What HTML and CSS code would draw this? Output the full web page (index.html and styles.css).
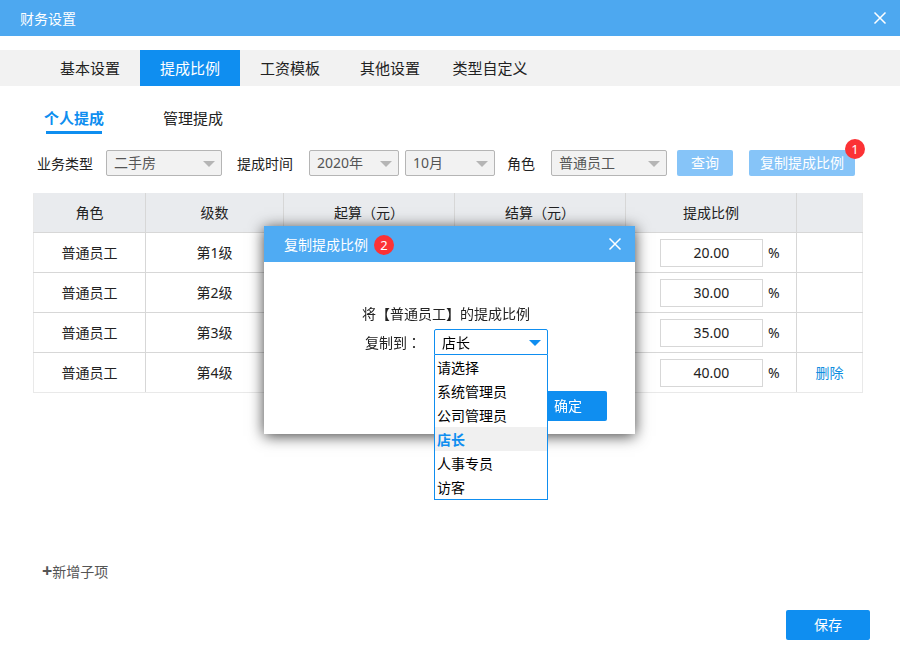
FILE: index.html
```
<!DOCTYPE html>
<html lang="zh-CN">
  <head>
    <meta charset="UTF-8" />
    <meta name="viewport" content="width=device-width, initial-scale=1.0" />
    <link rel="stylesheet" href="styles.css">
    <title>财务设置</title>
  </head>
  <body>
    <div class="window">
      <header class="titlebar">
        <h1>财务设置</h1>
        <button type="button" class="close" aria-label="关闭">
          <svg width="14" height="14" viewBox="0 0 14 14">
            <path d="M1.5 1.5L12.5 12.5M12.5 1.5L1.5 12.5" />
          </svg>
        </button>
      </header>

      <nav class="tabs">
        <a href="#basic">基本设置</a>
        <a href="#ratio" class="active">提成比例</a>
        <a href="#template">工资模板</a>
        <a href="#other">其他设置</a>
        <a href="#custom">类型自定义</a>
      </nav>

      <nav class="subtabs">
        <a href="#personal" class="active">个人提成</a>
        <a href="#manage">管理提成</a>
      </nav>

      <form class="filters">
        <label for="type">业务类型</label>
        <div class="select wide">
          <select id="type"><option>二手房</option></select>
        </div>
        <label for="year">提成时间</label>
        <div class="select">
          <select id="year"><option>2020年</option></select>
        </div>
        <div class="select">
          <select id="month" aria-label="月份"><option>10月</option></select>
        </div>
        <label for="role">角色</label>
        <div class="select wide">
          <select id="role"><option>普通员工</option></select>
        </div>
        <button type="button" class="btn-light query">查询</button>
        <div class="copy">
          <button type="button" class="btn-light">复制提成比例</button>
          <span class="badge">1</span>
        </div>
      </form>

      <main>
        <table>
          <colgroup>
            <col class="col-role" />
            <col class="col-level" />
            <col class="col-money" />
            <col class="col-money" />
            <col class="col-money" />
            <col class="col-action" />
          </colgroup>
          <thead>
            <tr>
              <th>角色</th>
              <th>级数</th>
              <th>起算（元）</th>
              <th>结算（元）</th>
              <th>提成比例</th>
              <th></th>
            </tr>
          </thead>
          <tbody>
            <tr>
              <td>普通员工</td>
              <td>第1级</td>
              <td></td>
              <td></td>
              <td>
                <div class="ratio"><input type="text" id="ratio1" value="20.00" /><label for="ratio1">%</label></div>
              </td>
              <td></td>
            </tr>
            <tr>
              <td>普通员工</td>
              <td>第2级</td>
              <td></td>
              <td></td>
              <td>
                <div class="ratio"><input type="text" id="ratio2" value="30.00" /><label for="ratio2">%</label></div>
              </td>
              <td></td>
            </tr>
            <tr>
              <td>普通员工</td>
              <td>第3级</td>
              <td></td>
              <td></td>
              <td>
                <div class="ratio"><input type="text" id="ratio3" value="35.00" /><label for="ratio3">%</label></div>
              </td>
              <td></td>
            </tr>
            <tr>
              <td>普通员工</td>
              <td>第4级</td>
              <td></td>
              <td></td>
              <td>
                <div class="ratio"><input type="text" id="ratio4" value="40.00" /><label for="ratio4">%</label></div>
              </td>
              <td><a href="#delete">删除</a></td>
            </tr>
          </tbody>
        </table>
      </main>

      <footer>
        <button type="button" class="add"><b>+</b>新增子项</button>
        <button type="button" class="btn save">保存</button>
      </footer>
    </div>

    <div class="overlay">
      <div class="dialog" role="dialog" aria-labelledby="dialog-title">
        <div class="titlebar">
          <h2 id="dialog-title">复制提成比例</h2>
          <span class="badge">2</span>
          <button type="button" class="close" aria-label="关闭">
            <svg width="14" height="14" viewBox="0 0 14 14">
              <path d="M1.5 1.5L12.5 12.5M12.5 1.5L1.5 12.5" />
            </svg>
          </button>
        </div>
        <div class="dialog-body">
          <p>将【普通员工】的提成比例</p>
          <div class="copy-to">
            <label for="target">复制到<span class="colon" lang="zh-TW">：</span></label>
            <div class="select open">
              <select id="target"><option>店长</option></select>
              <ul class="menu" role="listbox">
                <li role="option">请选择</li>
                <li role="option">系统管理员</li>
                <li role="option">公司管理员</li>
                <li role="option" class="selected" aria-selected="true">店长</li>
                <li role="option">人事专员</li>
                <li role="option">访客</li>
              </ul>
            </div>
          </div>
          <button type="button" class="btn confirm">确定</button>
        </div>
      </div>
    </div>
  </body>
</html>
```
FILE: styles.css
```
* {
  box-sizing: border-box;
}

body {
  margin: 0;
  font-family: "Noto Sans", "Noto Sans CJK SC", sans-serif;
  font-size: 14px;
  line-height: 20px;
  color: #222;
  background: #fff;
}

a {
  text-decoration: none;
}

button,
input,
select {
  font: inherit;
  margin: 0;
}

button {
  padding: 0;
  border: none;
  cursor: pointer;
}

.window {
  display: flex;
  flex-direction: column;
  min-height: 100vh;
}

/* title bars */
.titlebar {
  display: flex;
  align-items: center;
  height: 36px;
  padding: 0 13px 0 20px;
  color: #fff;
  background: #4da8f0;
}

.titlebar h1,
.titlebar h2 {
  margin: 0;
  padding-top: 2px;
  font-size: 14px;
  font-weight: normal;
}

.close {
  display: flex;
  margin-left: auto;
  background: none;
}

.close svg {
  fill: none;
  stroke: #fff;
  stroke-width: 1.5;
}

.badge {
  width: 20px;
  height: 20px;
  border-radius: 50%;
  font-size: 13px;
  text-align: center;
  color: #fff;
  background: #fc3235;
}

/* tabs */
.tabs {
  display: flex;
  height: 36px;
  margin-top: 14px;
  padding-left: 40px;
  background: #f2f2f2;
}

.tabs a {
  width: 100px;
  font-size: 15px;
  line-height: 36px;
  text-align: center;
  color: #222;
}

.tabs .active {
  color: #fff;
  background: #0f8ef0;
}

.subtabs {
  display: flex;
  gap: 59px;
  margin-top: 22px;
  padding-left: 44px;
}

.subtabs a {
  display: flex;
  flex-direction: column;
  align-items: center;
  height: 26px;
  font-size: 15px;
  color: #222;
}

.subtabs .active {
  font-weight: bold;
  color: #0f8ef0;
}

.subtabs .active::after {
  content: "";
  width: 56px;
  height: 3px;
  margin-top: 3px;
  background: #0f8ef0;
}

/* filters */
.filters {
  display: grid;
  grid-template-columns: 69px 131px 72px 96px 102px 44px 126px 72px 106px;
  align-items: center;
  margin-top: 16px;
  padding-left: 37px;
}

.filters label {
  padding-top: 2px;
}

.select {
  position: relative;
  width: 90px;
}

.select.wide {
  width: 116px;
}

.select select {
  display: block;
  width: 100%;
  height: 26px;
  padding: 0 7px;
  border: 1px solid #b5b5b5;
  border-radius: 2px;
  appearance: none;
  color: #555;
  background: #f2f2f2;
}

.select::after {
  content: "";
  position: absolute;
  top: 11px;
  right: 7px;
  border: 6px solid transparent;
  border-top-color: #b5b5b5;
  border-bottom: none;
  pointer-events: none;
}

.btn-light {
  height: 26px;
  border-radius: 2px;
  color: #fff;
  background: #86c4f8;
}

.query {
  width: 56px;
}

.copy {
  position: relative;
}

.copy .btn-light {
  display: block;
  width: 100%;
}

.copy .badge {
  position: absolute;
  top: -11px;
  right: -10px;
}

/* table */
main {
  margin-top: 17px;
  padding: 0 37px 0 33px;
}

table {
  width: 100%;
  table-layout: fixed;
  border-collapse: collapse;
  border: 1px solid #e9e9e9;
}

.col-role {
  width: 112px;
}

.col-level {
  width: 138px;
}

.col-money {
  width: 171px;
}

.col-action {
  width: 66px;
}

th,
td {
  height: 40px;
  padding: 0;
  border: 1px solid #d7d7d7;
  text-align: center;
  font-weight: normal;
}

tr > :first-child {
  border-left-color: #e9e9e9;
}

tr > :last-child {
  border-right-color: #e9e9e9;
}

tbody tr:last-child td {
  border-bottom-color: #e9e9e9;
}

th {
  height: 39px;
  border-top-color: #e9ebee;
  background: #e9ebee;
}

td a {
  color: #0f8ee0;
}

.ratio {
  display: flex;
  align-items: center;
  gap: 5px;
  padding-left: 34px;
}

.ratio input {
  width: 103px;
  height: 28px;
  border: 1px solid #d7d7d7;
  text-align: center;
  color: #222;
}

/* bottom */
footer {
  display: flex;
  flex-direction: column;
  gap: 28px;
  margin-top: auto;
  padding: 0 30px 20px 42px;
}

.add {
  align-self: flex-start;
  color: #555;
  background: none;
}

.add b {
  font-size: 18px;
  line-height: 1;
}

.btn {
  height: 30px;
  border-radius: 2px;
  color: #fff;
  background: #0f8ef0;
}

.save {
  align-self: flex-end;
  width: 84px;
}

/* dialog */
.overlay {
  position: fixed;
  inset: 0;
  display: flex;
  align-items: center;
  justify-content: center;
  padding-right: 1px;
}

.dialog {
  width: 371px;
  background: #fff;
  box-shadow: 0 2px 14px rgba(0, 0, 0, 0.75);
}

.dialog .titlebar {
  background: #4fabf3;
}

.dialog .badge {
  margin: 2px 0 0 6px;
}

.dialog-body {
  display: flex;
  flex-direction: column;
  padding: 42px 28px 13px 98px;
}

.dialog-body p {
  margin: 0 0 5px;
}

.copy-to {
  display: flex;
  align-items: center;
  gap: 13px;
}

.copy-to label {
  width: 59px;
  padding-top: 2px;
  text-align: right;
}

/* the traditional face sets the colon mid-cell */
.colon {
  font-family: "Noto Sans CJK TC", sans-serif;
  line-height: 1;
}

.copy-to .select {
  width: 114px;
}

.open select {
  padding-top: 2px;
  color: #000;
  border-color: #0f8ef0;
  border-radius: 2px 2px 0 0;
  background: #fff;
}

.open::after {
  border-top-color: #0f8ef0;
}

.menu {
  position: absolute;
  top: 100%;
  left: 0;
  z-index: 1;
  width: 100%;
  margin: 0;
  padding: 0;
  list-style: none;
  border: 1px solid #0f8ef0;
  border-top: none;
  color: #000;
  background: #fff;
}

.menu li {
  padding: 3px 2px 1px;
}

.menu .selected {
  font-weight: bold;
  color: #0f8ef0;
  background: #f0f0f0;
}

.confirm {
  align-self: flex-end;
  width: 78px;
  margin-top: 36px;
}
```
